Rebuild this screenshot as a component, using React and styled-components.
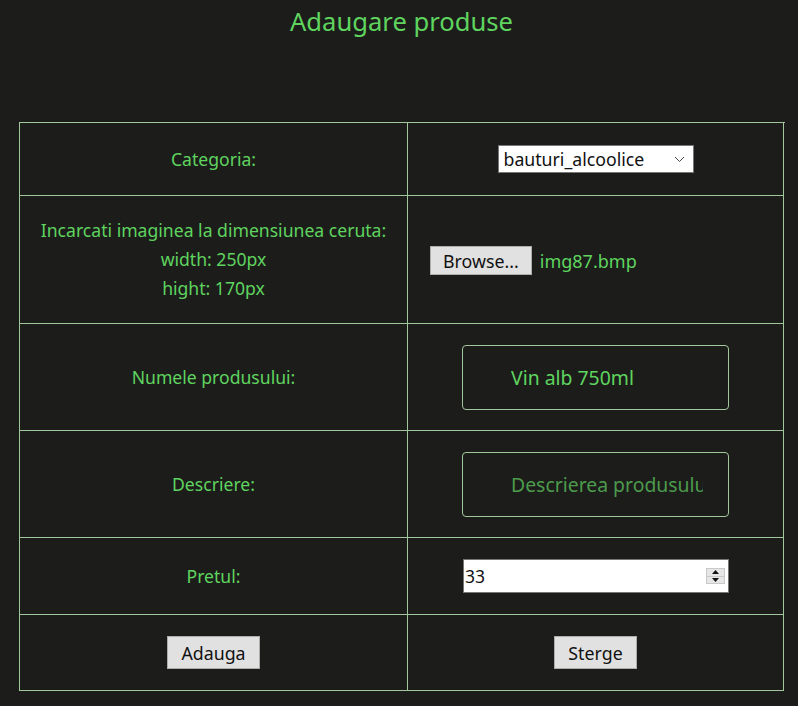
import React from 'react';
import styled, { createGlobalStyle } from 'styled-components';

const GlobalStyle = createGlobalStyle`
  html, body {
    margin: 0;
    padding: 0;
    background: #1c1d1b;
  }
  body {
    font-family: 'Noto Sans', 'Open Sans', sans-serif;
  }
`;

const Page = styled.div`
  width: 798px;
  min-height: 706px;
  background: #1c1d1b;
  padding-left: 19px;
  box-sizing: border-box;
`;

const Title = styled.h1`
  margin: 0;
  padding-top: 4px;
  height: 122px;
  box-sizing: border-box;
  width: 765px;
  text-align: center;
  font-size: 25.6px;
  font-weight: 400;
  color: #5fd45f;
`;

const FormGrid = styled.div`
  display: grid;
  grid-template-columns: 388px 376px;
  grid-template-rows: 73px 128px 107px 107px 77px 76px;
  width: 765px;
  border-top: 1px solid #a3c79c;
  border-left: 1px solid #a3c79c;
`;

const Cell = styled.div`
  box-sizing: border-box;
  border-right: 1px solid #a3c79c;
  border-bottom: 1px solid #a3c79c;
  display: flex;
  align-items: center;
  justify-content: ${p => (p.$start ? 'flex-start' : 'center')};
  padding-left: ${p => (p.$start ? '22px' : '0')};
`;

const Label = styled.div`
  color: #5fd45f;
  font-size: 17.6px;
  line-height: 29px;
  text-align: center;
`;

const SelectBox = styled.div`
  display: flex;
  align-items: center;
  width: 196px;
  height: 28px;
  box-sizing: border-box;
  background: #fff;
  border: 1px solid #767676;
  padding: 0 8px 0 5px;
`;

const Select = styled.select`
  flex: 1;
  appearance: none;
  border: none;
  outline: none;
  background: transparent;
  font-family: 'Noto Sans', 'Open Sans', sans-serif;
  font-size: 17.7px;
  color: #111;
  padding: 0;
`;

const FileRow = styled.div`
  display: flex;
  align-items: center;
  gap: 8px;
  margin-top: 2px;
`;

const GreyButton = styled.button`
  height: ${p => (p.$tall ? '33px' : '29px')};
  box-sizing: border-box;
  background: #e1e1e1;
  border: 1px solid #adadad;
  border-radius: 0;
  padding: 0 ${p => (p.$tall ? '13px' : '12px')};
  font-family: 'Noto Sans', 'Open Sans', sans-serif;
  font-size: 17.8px;
  color: #111;
  cursor: pointer;
`;

const FileName = styled.span`
  color: #5fd45f;
  font-size: 18px;
`;

const TextField = styled.input`
  width: 267px;
  height: 65px;
  box-sizing: border-box;
  background: transparent;
  border: 1px solid #a3c79c;
  border-radius: 4px;
  padding: 0 25px 0 48px;
  font-family: 'Noto Sans', 'Open Sans', sans-serif;
  font-size: 19.4px;
  color: #5fd45f;
  outline: none;

  &::placeholder {
    color: #4c9a4c;
    opacity: 1;
  }
`;

const NumberBox = styled.div`
  display: flex;
  align-items: center;
  width: 266px;
  height: 34px;
  box-sizing: border-box;
  background: #fff;
  border: 1px solid #767676;
  padding: 0 3px 0 1px;
  margin-left: 1px;
`;

const NumberInput = styled.input`
  flex: 1;
  min-width: 0;
  border: none;
  outline: none;
  background: transparent;
  font-family: 'Noto Sans', 'Open Sans', sans-serif;
  font-size: 17.5px;
  color: #111;
  padding: 0;
`;

const Spinner = styled.div`
  display: flex;
  flex-direction: column;
  width: 19px;
  height: 16px;
  border: 1px solid #c9c9c9;
  background: #e6e6e6;
  box-sizing: border-box;
`;

const SpinHalf = styled.div`
  flex: 1;
  display: flex;
  align-items: center;
  justify-content: center;
  border-top: ${p => (p.$bottom ? '1px solid #c9c9c9' : 'none')};
`;

const Chevron = () => (
  <svg width="11" height="7" viewBox="0 0 11 7" fill="none">
    <path d="M1 1l4.5 4.5L10 1" stroke="#444" strokeWidth="1" />
  </svg>
);

const Arrow = ({ down }) => (
  <svg width="7" height="4" viewBox="0 0 7 4">
    <path d={down ? 'M0 0h7L3.5 4z' : 'M0 4h7L3.5 0z'} fill="#111" />
  </svg>
);

const App = () => (
  <Page>
    <GlobalStyle />
    <Title>Adaugare produse</Title>
    <FormGrid>
      <Cell>
        <Label>Categoria:</Label>
      </Cell>
      <Cell>
        <SelectBox>
          <Select defaultValue="bauturi_alcoolice">
            <option value="bauturi_alcoolice">bauturi_alcoolice</option>
          </Select>
          <Chevron />
        </SelectBox>
      </Cell>

      <Cell>
        <Label>
          Incarcati imaginea la dimensiunea ceruta:
          <br />
          width: 250px
          <br />
          hight: 170px
        </Label>
      </Cell>
      <Cell $start>
        <FileRow>
          <GreyButton type="button">Browse...</GreyButton>
          <FileName>img87.bmp</FileName>
        </FileRow>
      </Cell>

      <Cell>
        <Label>Numele produsului:</Label>
      </Cell>
      <Cell>
        <TextField type="text" defaultValue="Vin alb 750ml" />
      </Cell>

      <Cell>
        <Label>Descriere:</Label>
      </Cell>
      <Cell>
        <TextField type="text" placeholder="Descrierea produsului" />
      </Cell>

      <Cell>
        <Label>Pretul:</Label>
      </Cell>
      <Cell>
        <NumberBox>
          <NumberInput type="text" defaultValue="33" />
          <Spinner>
            <SpinHalf><Arrow /></SpinHalf>
            <SpinHalf $bottom><Arrow down /></SpinHalf>
          </Spinner>
        </NumberBox>
      </Cell>

      <Cell>
        <GreyButton type="button" $tall>Adauga</GreyButton>
      </Cell>
      <Cell>
        <GreyButton type="button" $tall>Sterge</GreyButton>
      </Cell>
    </FormGrid>
  </Page>
);

export default App;
